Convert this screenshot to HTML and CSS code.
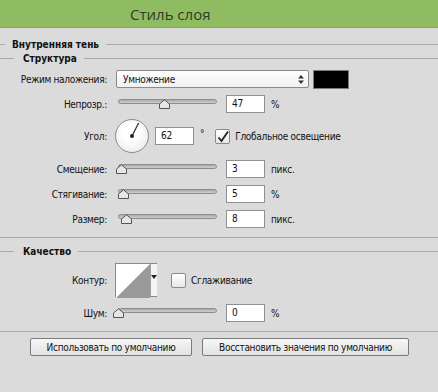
FILE: index.html
```html
<!DOCTYPE html>
<html lang="ru">
<head>
    <meta charset="UTF-8">
    <title>Стиль слоя</title>
    <link rel="stylesheet" href="styles.css">
</head>
<body>
    <div class="titlebar"><span>Стиль слоя</span></div>

    <div class="panel">
        <div class="legend first"><span>Внутренняя тень</span></div>
        <div class="legend"><span>Структура</span></div>

        <div class="row r-blend">
            <label class="lbl">Режим наложения:</label>
            <div class="select">
                <span>Умножение</span>
                <svg class="updown" width="6" height="9" viewBox="0 0 6 9">
                    <path d="M3 0 L6 3.5 L0 3.5 Z M0 5.5 L6 5.5 L3 9 Z" fill="#333"/>
                </svg>
            </div>
            <div class="swatch"></div>
        </div>

        <div class="row r-opacity">
            <label class="lbl">Непрозр.:</label>
            <div class="slider">
                <div class="track"></div>
                <svg class="thumb" style="left: 41px" width="11" height="10" viewBox="0 0 11 10"><polygon points="0.5,9.5 0.5,5 5.5,0.8 10.5,5 10.5,9.5"/></svg>
            </div>
            <div class="field">47</div>
            <span class="unit">%</span>
        </div>

        <div class="row r-angle">
            <label class="lbl">Угол:</label>
            <div class="dial">
                <svg width="34" height="34" viewBox="0 0 34 34">
                    <line x1="17" y1="17" x2="23.6" y2="4" stroke="#333" stroke-width="1.3"/>
                    <circle cx="17" cy="17" r="2" fill="#222"/>
                </svg>
            </div>
            <div class="field angle">62</div>
            <span class="deg">°</span>
            <div class="check on">
                <svg width="14" height="14" viewBox="0 0 14 14"><path d="M2.5 7.5 L5.5 11 L12 1.5" fill="none" stroke="#222" stroke-width="1.8"/></svg>
            </div>
            <span class="chk-label">Глобальное освещение</span>
        </div>

        <div class="row r-distance">
            <label class="lbl">Смещение:</label>
            <div class="slider">
                <div class="track"></div>
                <svg class="thumb" style="left: -2px" width="11" height="10" viewBox="0 0 11 10"><polygon points="0.5,9.5 0.5,5 5.5,0.8 10.5,5 10.5,9.5"/></svg>
            </div>
            <div class="field">3</div>
            <span class="unit">пикс.</span>
        </div>

        <div class="row r-choke">
            <label class="lbl">Стягивание:</label>
            <div class="slider">
                <div class="track"></div>
                <svg class="thumb" style="left: 0px" width="11" height="10" viewBox="0 0 11 10"><polygon points="0.5,9.5 0.5,5 5.5,0.8 10.5,5 10.5,9.5"/></svg>
            </div>
            <div class="field">5</div>
            <span class="unit">%</span>
        </div>

        <div class="row r-size">
            <label class="lbl">Размер:</label>
            <div class="slider">
                <div class="track"></div>
                <svg class="thumb" style="left: 3px" width="11" height="10" viewBox="0 0 11 10"><polygon points="0.5,9.5 0.5,5 5.5,0.8 10.5,5 10.5,9.5"/></svg>
            </div>
            <div class="field">8</div>
            <span class="unit">пикс.</span>
        </div>

        <div class="sep s1"></div>

        <div class="legend"><span>Качество</span></div>

        <div class="row r-contour">
            <label class="lbl">Контур:</label>
            <div class="contour">
                <svg class="curve" width="34" height="34" viewBox="0 0 34 34">
                    <rect width="34" height="34" fill="#fff"/>
                    <polygon points="0,34 34,0 34,34" fill="#9a9a9a"/>
                </svg>
                <div class="drop">
                    <svg width="6" height="4" viewBox="0 0 6 4"><path d="M0 0 H6 L3 4 Z" fill="#222"/></svg>
                </div>
            </div>
            <div class="check"></div>
            <span class="chk-label">Сглаживание</span>
        </div>

        <div class="row r-noise">
            <label class="lbl">Шум:</label>
            <div class="slider">
                <div class="track"></div>
                <svg class="thumb" style="left: -5px" width="11" height="10" viewBox="0 0 11 10"><polygon points="0.5,9.5 0.5,5 5.5,0.8 10.5,5 10.5,9.5"/></svg>
            </div>
            <div class="field">0</div>
            <span class="unit">%</span>
        </div>

        <div class="sep s2"></div>

        <div class="buttons">
            <button class="btn b1">Использовать по умолчанию</button>
            <button class="btn b2">Восстановить значения по умолчанию</button>
        </div>
    </div>
</body>
</html>
```

FILE: styles.css
```css
* {
    margin: 0;
    padding: 0;
    box-sizing: border-box;
}
html, body {
    width: 438px;
    height: 392px;
    overflow: hidden;
}
body {
    background: #dbdbdb;
    font-family: "DejaVu Sans", sans-serif;
    font-stretch: condensed;
    font-size: 10px;
    letter-spacing: -0.3px;
    color: #111;
}

.titlebar {
    height: 28px;
    background: #8fbb61;
    border-bottom: 1px solid #7ea653;
    padding-left: 130px;
    display: flex;
    align-items: center;
}
.titlebar span {
    font-family: "Open Sans", "Noto Sans", sans-serif;
    font-stretch: normal;
    font-size: 15px;
    letter-spacing: 0;
    color: #333a2c;
}

.panel {
    padding-top: 9px;
}

/* заголовки групп с линией */
.legend {
    display: flex;
    align-items: center;
    height: 14px;
    font-weight: bold;
    letter-spacing: 0;
}
.legend::before {
    content: "";
    width: 14px;
    border-top: 1px solid #a9a9a9;
}
.legend::after {
    content: "";
    flex: 1;
    border-top: 1px solid #a9a9a9;
}
.legend span {
    margin: 0 7px 0 9px;
}
.legend.first::before {
    width: 5px;
}
.legend.first span {
    margin-left: 7px;
}

.row {
    display: flex;
    align-items: center;
    height: 20px;
    margin-top: 5px;
}
.lbl {
    width: 107px;
    text-align: right;
    flex-shrink: 0;
}

.r-blend {
    margin-top: 4px;
}
.r-angle {
    height: 34px;
}
.r-distance {
    margin-top: 6px;
}
.r-contour {
    height: 34px;
    margin-top: 5px;
}
.r-noise {
    margin-top: 6px;
}

.select {
    width: 193px;
    height: 18px;
    margin-left: 9px;
    border: 1px solid #8a8a8a;
    border-radius: 2px;
    background: linear-gradient(#ffffff, #f1f1f1);
    display: flex;
    align-items: center;
    justify-content: space-between;
    padding: 0 4px 0 6px;
}
.swatch {
    width: 36px;
    height: 19px;
    margin-left: 4px;
    background: #000;
    border: 1px solid #7a7a7a;
}

.slider {
    position: relative;
    width: 99px;
    height: 10px;
    margin: 0 9px 0 11px;
}
.track {
    height: 5px;
    border: 1px solid #8c8c8c;
    border-radius: 3px;
    background: linear-gradient(#a9a9a9, #d0d0d0);
}
.thumb {
    position: absolute;
    top: 0;
}
.thumb polygon {
    fill: #e6e6e6;
    stroke: #555;
    stroke-width: 1;
}

.field {
    width: 39px;
    height: 18px;
    background: #fff;
    border: 1px solid #909090;
    padding-left: 5px;
    line-height: 16px;
}
.unit {
    margin-left: 6px;
}

.dial {
    width: 34px;
    height: 34px;
    margin-left: 8px;
    border: 1px solid #8a8a8a;
    border-radius: 50%;
    background: radial-gradient(circle at 45% 40%, #ffffff 30%, #e4e4e4 100%);
}
.dial svg {
    display: block;
    margin: -1px;
}
.field.angle {
    margin-left: 6px;
    height: 18px;
}
.deg {
    margin: 0 11px 0 6px;
    align-self: flex-start;
    margin-top: 9px;
}

.check {
    width: 15px;
    height: 15px;
    border: 1px solid #8a8a8a;
    border-radius: 2px;
    background: linear-gradient(#ffffff, #e8e8e8);
}
.check svg {
    display: block;
}
.chk-label {
    margin-left: 5px;
}
.r-contour .check {
    margin-left: 14px;
}

.contour {
    display: flex;
    width: 42px;
    height: 34px;
    margin-left: 8px;
    border: 1px solid #8a8a8a;
}
.contour .curve {
    display: block;
    flex-shrink: 0;
}
.contour .drop {
    flex: 1;
    border-left: 1px solid #a0a0a0;
    background: #f4f4f4;
    display: flex;
    justify-content: center;
    padding-top: 11px;
}
.contour .drop svg {
    display: block;
}

.sep {
    border-top: 1px solid #a9a9a9;
}
.sep.s1 {
    margin-top: 8px;
    margin-bottom: 6px;
}
.sep.s2 {
    margin-top: 8px;
}

.buttons {
    display: flex;
    gap: 10px;
    padding-left: 30px;
    margin-top: 6px;
}
.btn {
    height: 18px;
    font-family: inherit;
    font-stretch: inherit;
    font-size: 10px;
    letter-spacing: -0.3px;
    color: #111;
    border: 1px solid #7a7a7a;
    border-radius: 2px;
    background: linear-gradient(#f7f7f7, #e2e2e2);
}
.b1 {
    width: 162px;
}
.b2 {
    width: 207px;
}
```
